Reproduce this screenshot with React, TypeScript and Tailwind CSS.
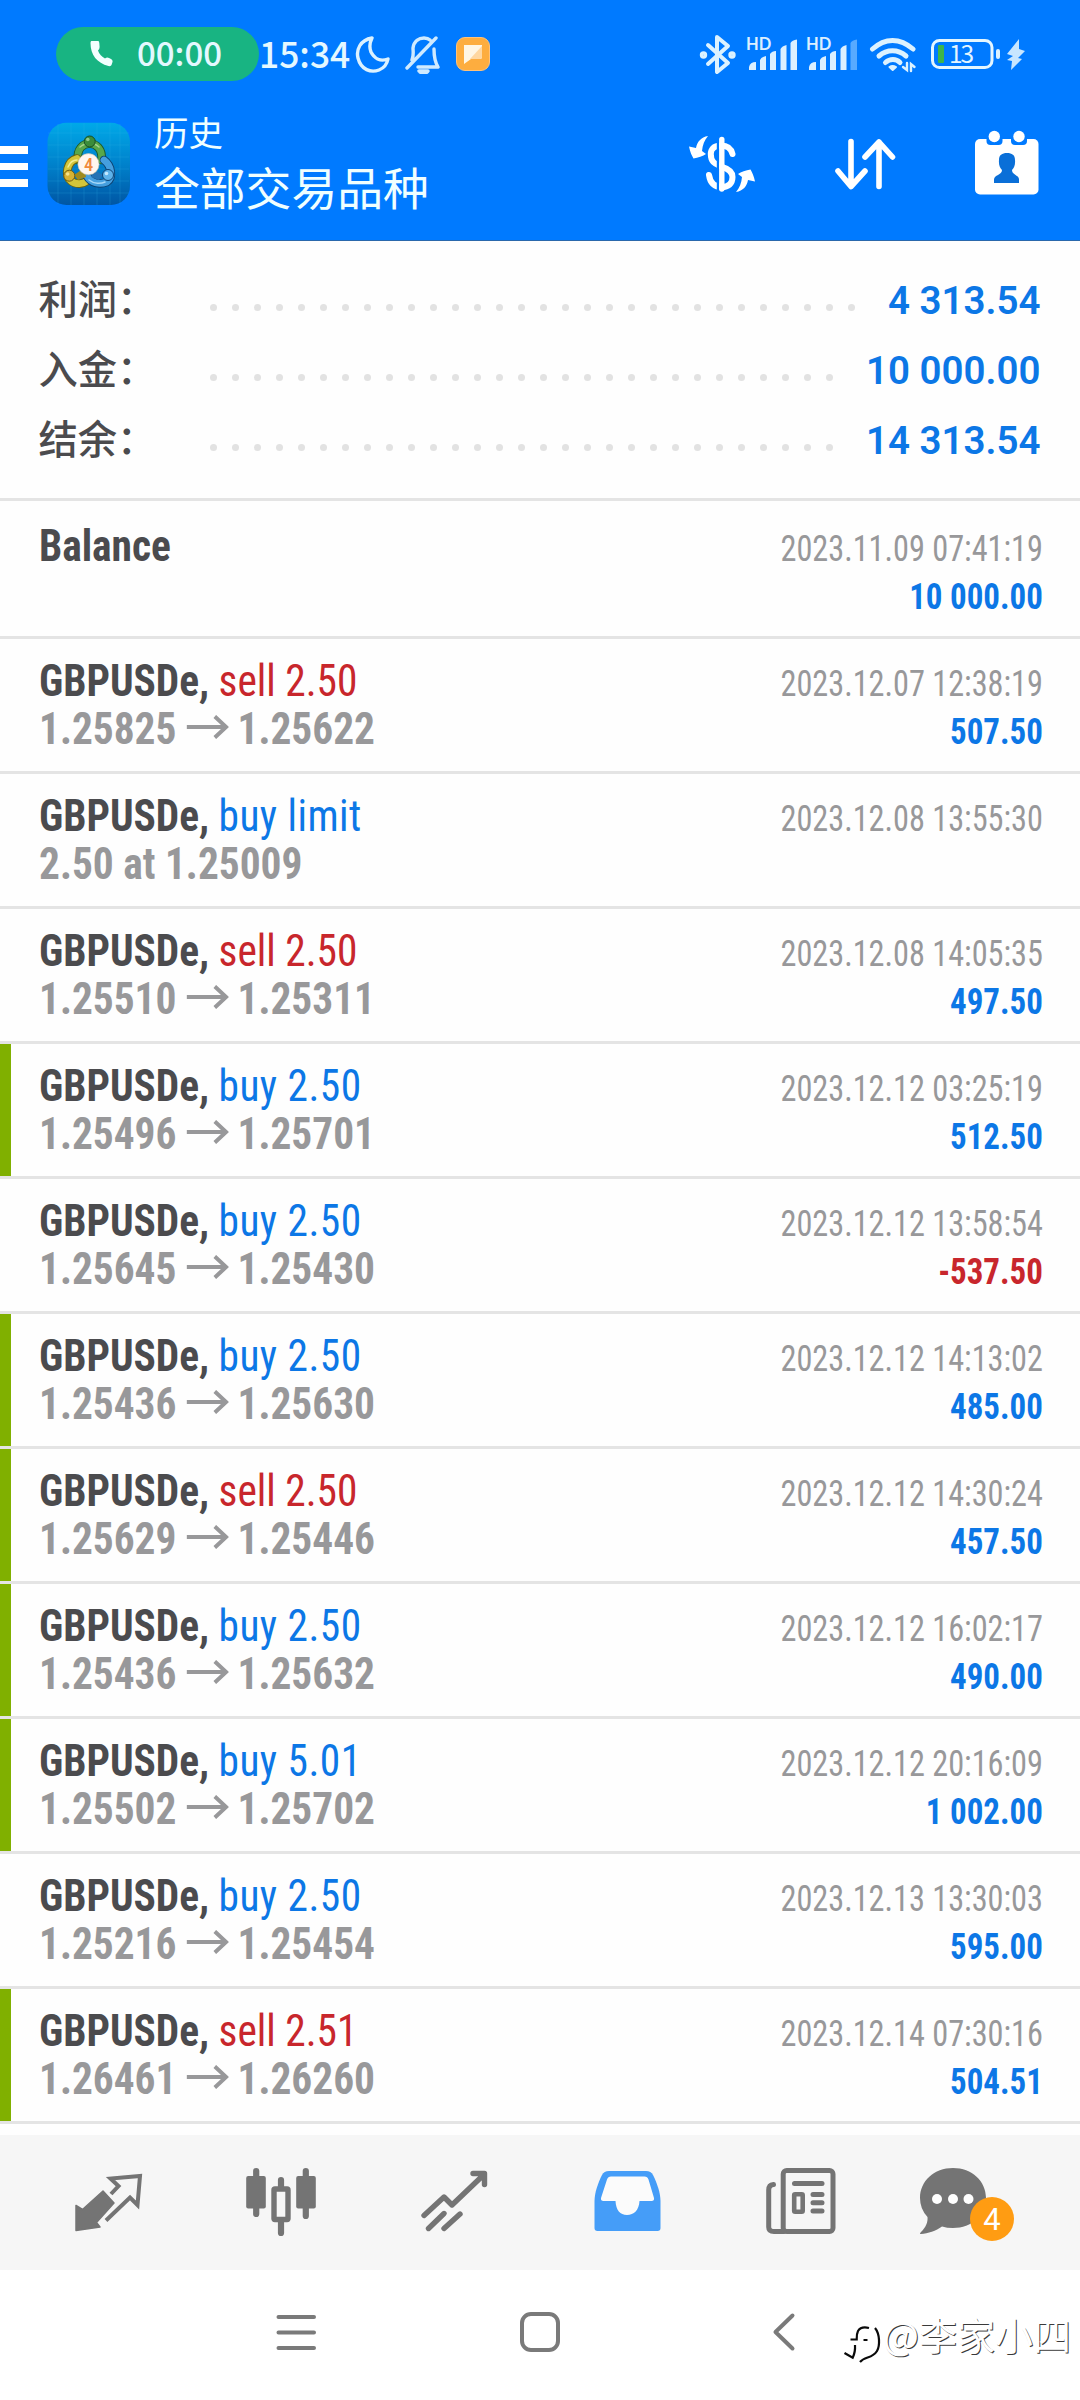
import React from "react";

type Row = {
  symbol: string;
  side?: "buy" | "sell";
  text?: string;
  from?: string;
  to?: string;
  note?: string;
  date: string;
  value?: string;
  marked?: boolean;
};

const rows: Row[] = [
  { symbol: "Balance", date: "2023.11.09 07:41:19", value: "10 000.00" },
  { symbol: "GBPUSDe,", side: "sell", text: "sell 2.50", from: "1.25825", to: "1.25622", date: "2023.12.07 12:38:19", value: "507.50" },
  { symbol: "GBPUSDe,", side: "buy", text: "buy limit", note: "2.50 at 1.25009", date: "2023.12.08 13:55:30" },
  { symbol: "GBPUSDe,", side: "sell", text: "sell 2.50", from: "1.25510", to: "1.25311", date: "2023.12.08 14:05:35", value: "497.50" },
  { symbol: "GBPUSDe,", side: "buy", text: "buy 2.50", from: "1.25496", to: "1.25701", date: "2023.12.12 03:25:19", value: "512.50", marked: true },
  { symbol: "GBPUSDe,", side: "buy", text: "buy 2.50", from: "1.25645", to: "1.25430", date: "2023.12.12 13:58:54", value: "-537.50" },
  { symbol: "GBPUSDe,", side: "buy", text: "buy 2.50", from: "1.25436", to: "1.25630", date: "2023.12.12 14:13:02", value: "485.00", marked: true },
  { symbol: "GBPUSDe,", side: "sell", text: "sell 2.50", from: "1.25629", to: "1.25446", date: "2023.12.12 14:30:24", value: "457.50", marked: true },
  { symbol: "GBPUSDe,", side: "buy", text: "buy 2.50", from: "1.25436", to: "1.25632", date: "2023.12.12 16:02:17", value: "490.00", marked: true },
  { symbol: "GBPUSDe,", side: "buy", text: "buy 5.01", from: "1.25502", to: "1.25702", date: "2023.12.12 20:16:09", value: "1 002.00", marked: true },
  { symbol: "GBPUSDe,", side: "buy", text: "buy 2.50", from: "1.25216", to: "1.25454", date: "2023.12.13 13:30:03", value: "595.00" },
  { symbol: "GBPUSDe,", side: "sell", text: "sell 2.51", from: "1.26461", to: "1.26260", date: "2023.12.14 07:30:16", value: "504.51", marked: true },
];

const summary = [
  { label: "利润：", value: "4 313.54", dots: 30 },
  { label: "入金：", value: "10 000.00", dots: 29 },
  { label: "结余：", value: "14 313.54", dots: 29 },
];

function Signal({ weak }: { weak?: boolean }) {
  return (
    <div className="relative h-[40px] w-[52px]">
      <svg viewBox="746 34 52 40" className="h-[40px] w-[52px]" fill="#dcf0ff">
        <path d="M749 70V67Q750 62 756 62V70Z" />
        <path d="M760 70V60Q761 57 766 56V70Z" />
        <path d="M770 70V54Q772 51 776 51V70Z" />
        <path d="M780.500 70V49Q782 46 786.500 45V70Z" />
        <path d="M790.500 70V43Q792 40 797 39.500V70Z" fill={weak ? "#58aaff" : "#dcf0ff"} />
      </svg>
      <span className="absolute top-0 left-0 font-['Lato',sans-serif] text-[16.500px] leading-[20px] font-bold text-[#dcf0ff]">HD</span>
    </div>
  );
}

function StatusBar() {
  return (
    <div className="flex h-[108px] items-center font-['Noto_Sans_CJK_SC',sans-serif] font-medium text-[#e4f8ff]">
      <div className="ml-[56px] flex h-[54px] w-[203px] items-center rounded-full bg-[#18b482]">
        <svg viewBox="90 42 23 26" className="ml-[34px] h-[26px] w-[23px]" fill="#f2ffff">
          <path d="M90.500 44Q90.500 41.500 93 41.500H97Q99 41.500 99.300 44L99.600 48Q99.600 50 98 51.500C99 55 102 58 105 59.500Q107 58 109 59L111 60Q113 61 112.500 63L111.500 66Q111 67.500 108.500 67C97 64 90.500 56 90.500 44Z" />
        </svg>
        <span className="ml-[24px] w-[86px] text-[33px] leading-[51px] -mt-[3px] whitespace-nowrap">00:00</span>
      </div>
      <span className="-mt-[2px] w-[94px] origin-left scale-x-[0.97] text-[36.500px] leading-[54px] whitespace-nowrap">15:34</span>
      <svg viewBox="355 35 37 39" className="ml-[2px] h-[39px] w-[37px]" fill="none" stroke="#dcf2ff" strokeWidth="3.4" strokeLinejoin="round">
        <path d="M372 38C360 40 356 50 358 58C361 70 371 73 379 70C384 68 387 64 388 59C380 62 374 58 371 52C369 47 370 42 372 38Z" />
      </svg>
      <svg viewBox="405 35 38 39" className="ml-[13px] h-[39px] w-[38px]" fill="none" stroke="#cfeaff" strokeWidth="3.4" strokeLinecap="round" strokeLinejoin="round">
        <path d="M407 68L436 38M412 60C414 55 413 51 413 48C414 41 419 38 424 38Q428 38 430 40M434 49C434 58 435 62 438 67H418" />
        <path d="M419 71H428Q427 73 424 73Q420 73 419 71" />
      </svg>
      <div className="ml-[13px] flex h-[34px] w-[34px] items-center justify-center rounded-[9px] border border-[#ffc27a] bg-[#fdad3f]">
        <svg viewBox="0 0 20 20" className="h-[20px] w-[20px]">
          <path d="M1 1H19V13Q19 15 17 15H8L1 20Z" fill="#fff6e4" />
          <path d="M19 2V13Q19 15 17 15H7Z" fill="#ffd7a0" />
        </svg>
      </div>
      <div className="ml-[209px] flex items-center">
        <svg viewBox="699 33 38 41" className="h-[41px] w-[38px]" fill="none" stroke="#dcf2ff" strokeWidth="4" strokeLinecap="round" strokeLinejoin="round">
          <path d="M708 44L728 62L717 71V36L728 45L708 63" />
          <circle cx="703.500" cy="54" r="1.700" />
          <circle cx="732" cy="54" r="1.700" />
        </svg>
        <div className="ml-[9px]"><Signal /></div>
        <div className="ml-[8px]"><Signal weak /></div>
        <svg viewBox="869 35 49 38" className="ml-[11px] h-[38px] w-[49px]" fill="none" stroke="#dcf2ff" strokeWidth="5" strokeLinecap="round">
          <path d="M872.500 49C885 37.500 900 37.500 913 49" />
          <path d="M879 56C887 49 898 49 906 56" />
          <path d="M885.500 62.500C890 58.500 896 58.500 900 62.500" />
          <path d="M889.500 67Q892.500 65 896 67L892.700 70Z" strokeWidth="2" fill="#dcf2ff" strokeLinejoin="round" />
          <path d="M907 63V70L903 67M911 71V64L914.500 67" strokeWidth="2.400" />
        </svg>
        <svg viewBox="930 38 72 32" className="ml-[12px] h-[32px] w-[72px]" fill="none">
          <rect x="932.500" y="40.500" width="59.500" height="27" rx="7" stroke="#e4f6ff" strokeWidth="3" />
          <rect x="938" y="45" width="6" height="18" rx="1" fill="#3db54a" />
          <rect x="996" y="49" width="4" height="10" rx="2" fill="#dcf2ff" />
          <text x="949" y="63" fontSize="24.500" fontWeight="400" fill="#e4f6ff" textLength="25">13</text>
        </svg>
        <svg viewBox="1006 38 20 33" className="ml-[4px] h-[33px] w-[20px]" fill="#c8e6ff">
          <path d="M1019 39L1007 54L1013 56L1007 60L1012 61L1011 70L1022 59L1018 58L1025 51L1019 49Z" />
        </svg>
      </div>
    </div>
  );
}

function AppLogo() {
  return (
    <svg viewBox="46 122 84 84" className="ml-[19px] h-[84px] w-[84px]">
      <defs>
        <linearGradient id="tile" x1="0" y1="0" x2="0" y2="1">
          <stop offset="0" stopColor="#00a9e8" />
          <stop offset="0.500" stopColor="#0082cc" />
          <stop offset="1" stopColor="#0056a4" />
        </linearGradient>
      </defs>
      <rect x="46.500" y="122.700" width="82.500" height="82.300" rx="19" fill="url(#tile)" />
      <path d="M57 124V204M70 123V205M83 123V205M96 123V205M109 123V205M119 124V204M47 133H128M47 145H128M47 157H128M47 169H128M47 181H128M47 193H128" stroke="#35b6ec" strokeOpacity="0.250" strokeWidth="0.800" fill="none" />
      <g fill="none" strokeLinecap="round">
        <path d="M77 160C74 138 103 138 100.500 160" stroke="#1b5a2a" strokeWidth="8.600" />
        <path d="M77 160C74 138 103 138 100.500 160" stroke="#58a84b" strokeWidth="6.800" />
        <path d="M79 147C85 142 93 142 98 147" stroke="#a6d58c" strokeWidth="1.500" />
        <path d="M76 158.500C66 161 63 176 70 181C75 185 82 184 86 181" stroke="#6b6410" strokeWidth="8.600" />
        <path d="M76 158.500C66 161 63 176 70 181C75 185 82 184 86 181" stroke="#d3c53a" strokeWidth="6.800" />
        <path d="M67 167C69 162 73 160 76 160" stroke="#f4ec90" strokeWidth="1.500" />
        <path d="M103 160C111 166 112 178 106 182C98 185 90 183 86 176" stroke="#0d4272" strokeWidth="8.600" />
        <path d="M103 160C111 166 112 178 106 182C98 185 90 183 86 176" stroke="#459fdf" strokeWidth="6.800" />
        <path d="M88 180C93 184 100 184 104 182" stroke="#a7d8f8" strokeWidth="1.500" />
      </g>
      <path d="M73 175L83 168L85 177L77 180Z" fill="#a08a1c" />
      <path d="M102 175L93 170L90 177L98 180Z" fill="#2472b4" />
      <circle cx="88.700" cy="141.500" r="5.500" fill="#3b8c3b" stroke="#174d24" />
      <circle cx="86.800" cy="139.500" r="1.800" fill="#8fc98a" />
      <circle cx="68.300" cy="175.700" r="5.500" fill="#d6b233" stroke="#6f5a10" />
      <circle cx="66.700" cy="174" r="1.800" fill="#f5e28a" />
      <circle cx="107" cy="175" r="5.500" fill="#5db2ea" stroke="#0d4272" />
      <circle cx="105.500" cy="173.500" r="1.800" fill="#c4e8ff" />
      <circle cx="87.500" cy="164.200" r="10.600" fill="#fff6ee" stroke="#c9c1a8" strokeWidth="0.600" />
      <text x="87.500" y="171" textAnchor="middle" fontSize="18.500" fontWeight="500" fill="#f08a3c" className="font-['Roboto',sans-serif]">4</text>
    </svg>
  );
}

function Toolbar() {
  return (
    <div className="flex h-[132px] items-start">
      <div className="mt-[38px] flex w-[28px] flex-col gap-[9px]">
        <div className="h-[7.500px] bg-white" />
        <div className="h-[7.500px] bg-white" />
        <div className="h-[7.500px] bg-white" />
      </div>
      <div className="mt-[14px]"><AppLogo /></div>
      <div className="ml-[23px] w-[301px] font-['Noto_Sans_CJK_SC',sans-serif] font-normal text-[#f0ffff]">
        <div className="-mt-px text-[34.500px] leading-[48px]">历史</div>
        <div className="mt-px text-[45.800px] leading-[60px]">全部交易品种</div>
      </div>
      <svg viewBox="688 135 68 58" className="mt-[27px] ml-[233px] h-[58px] w-[68px]" fill="#fff">
        <path d="M732.500 154C731 148 727 145.500 721 145.500C713 145.500 710.800 150 710.800 154C710.800 163 716 164 722 167C729 169 732.500 172 732.500 177C732.500 184 728 187 722 187C714 187 710 182 709 175" fill="none" stroke="#fff" strokeWidth="6" strokeLinecap="round" />
        <path d="M718 138V191" stroke="#007aff" strokeWidth="2.400" />
        <path d="M721.800 139.500V189" stroke="#fff" strokeWidth="5.400" strokeLinecap="round" />
        <path id="swap" d="M708 136C701 137 697 142 696 148L689 146.500C690 152 692 156 693.500 158.500C698 158 703 156 706 154L702 151C702.500 145 704.500 140 708 136Z" />
        <use href="#swap" transform="rotate(180 722 164)" />
      </svg>
      <svg viewBox="834 137 62 54" className="mt-[29px] ml-[78px] h-[54px] w-[62px]" fill="none" stroke="#fff" strokeWidth="5.600" strokeLinecap="round" strokeLinejoin="round">
        <path d="M851 141.500V186M838 171L851 186.500L865 171" />
        <path d="M879 186.500V142M865 157L879 142L892.500 157" />
      </svg>
      <svg viewBox="974 130 66 66" className="mt-[22px] ml-[78px] h-[66px] w-[66px]" fill="#fff">
        <rect x="975" y="139" width="63.500" height="55.500" rx="5" />
        <rect x="986.500" y="130" width="16" height="15" rx="4" fill="#007aff" />
        <rect x="1011" y="130" width="16" height="15" rx="4" fill="#007aff" />
        <circle cx="994.300" cy="136.500" r="5.700" />
        <circle cx="1019" cy="136.500" r="5.700" />
        <path d="M1007 153C1012 153 1015 155 1015 160C1015.500 165 1014 168 1012 170C1012 175 1019 175 1019 179.500V183H994V179.500C994 175 1002 175 1002 170C1000 168 998.500 165 999 160C999 155 1002 153 1007 153Z" fill="#0a6fd8" />
      </svg>
    </div>
  );
}

function Summary() {
  return (
    <div className="h-[260px] border-b-[3px] border-[#e4e4e4] pt-[24px]">
      {summary.map((s) => (
        <div key={s.label} className="flex h-[70px] items-start pr-[39.500px] pl-[38.500px]">
          <span className="w-[171.500px] font-['Noto_Sans_CJK_SC',sans-serif] text-[39.300px] leading-[64px] font-medium text-[#4b4b4e]">{s.label}</span>
          <span className="mt-[39px] flex gap-[15px]">
            {Array.from({ length: s.dots }, (_, i) => (
              <i key={i} className="h-[7px] w-[7px] shrink-0 rounded-full bg-[#e2e2e2]" />
            ))}
          </span>
          <span className="ml-auto font-['Roboto',sans-serif] text-[38.500px] leading-[71px] font-semibold whitespace-nowrap text-[#0c77e6] [font-stretch:100%]">{s.value}</span>
        </div>
      ))}
    </div>
  );
}

function HistoryRow({ row, first }: { row: Row; first: boolean }) {
  const tone = row.side === "sell" ? "text-[#c8262c]" : "tracking-[0.5px] text-[#0c77e6]";
  const money = row.value?.startsWith("-") ? "text-[#c8262c]" : "text-[#0c77e6]";
  return (
    <div className={`flex border-b-[3px] border-[#e4e4e4] ${first ? "h-[138px] pt-[3px]" : "h-[135px]"}`}>
      <div className={`w-[11px] ${row.marked ? "bg-[#80b000]" : ""}`} />
      <div className="ml-[28px] origin-left scale-x-[0.94] pt-[18px] text-[44px] leading-[48px] whitespace-pre">
        <div className="flex">
          <span className="font-bold text-[#4b4b4e]">{row.symbol}</span>
          {row.text && <span className={`ml-[10px] ${tone}`}>{row.text}</span>}
        </div>
        <div className="flex font-bold text-[#98989a]">
          {row.note ?? row.from}
          {row.to && (
            <>
              <svg viewBox="0 0 45 24" className="mr-[9px] ml-[11px] mt-[10px] h-[24px] w-[45px]" fill="none" stroke="#98989a" strokeWidth="4.200">
                <path d="M0 12H42M30 1.500L42 12L30 22.500" />
              </svg>
              <span>{row.to}</span>
            </>
          )}
        </div>
      </div>
      <div className="mr-[37px] ml-auto pt-[21px] text-right text-[36px] leading-[48px] whitespace-pre">
        <div className="origin-right scale-x-[0.896] text-[#98989a]">{row.date}</div>
        <div className={`origin-right scale-x-[0.915] font-bold ${money}`}>{row.value}</div>
      </div>
    </div>
  );
}

function Tab({ children }: { children: React.ReactNode }) {
  return <div className="relative flex h-[135px] w-[173px] items-center justify-center">{children}</div>;
}

function TabBar() {
  const size = "h-[81px] w-[96px]";
  return (
    <div className="mt-[11px] flex h-[135px] bg-[#f6f6f6] pl-[21.500px]">
      <Tab>
        <svg viewBox="60 2162 96 81" className={size} fill="#747474">
          <path d="M76 2205.500V2230.500L100 2227L96.500 2222.500L114 2203L103 2191L82.500 2209.500Z" stroke="#747474" strokeWidth="1.500" strokeLinejoin="round" />
          <path d="M111 2194L118.500 2186L110.500 2178.500L140 2176L137.500 2205L130 2197.500L106 2220.500" fill="none" stroke="#747474" strokeWidth="4" />
        </svg>
      </Tab>
      <Tab>
        <svg viewBox="233 2162 96 81" className={size} fill="#747474">
          <path d="M256.200 2171V2214M305.800 2171V2216M281 2180V2188M281 2221V2233" stroke="#747474" strokeWidth="6.200" strokeLinecap="round" />
          <rect x="246.200" y="2176" width="19.600" height="32.500" rx="2" />
          <rect x="296.200" y="2176" width="19.600" height="32.500" rx="2" />
          <rect x="274" y="2189" width="14" height="30.500" rx="1" fill="#f6f6f6" stroke="#747474" strokeWidth="5.400" />
        </svg>
      </Tab>
      <Tab>
        <svg viewBox="406 2162 96 81" className={size} fill="none" stroke="#747474" strokeWidth="5.400" strokeLinecap="round" strokeLinejoin="round">
          <path d="M424 2215.500L444 2197L452 2205L484 2174.500M473 2173.500H484.500V2184.500" />
          <path d="M428.500 2228.500L444 2213.500M444 2228.500L460 2214" />
        </svg>
      </Tab>
      <Tab>
        <svg viewBox="579 2162 96 81" className={size}>
          <path d="M609 2171H646Q651 2171 653 2175C657 2183 660.500 2193 660.500 2201V2228Q660.500 2231 657.500 2231H597.500Q594.500 2231 594.500 2228V2201C594.500 2193 598 2183 602 2175Q604 2171 609 2171Z" fill="#459df8" />
          <path d="M611 2176.500H644.500Q647.500 2176.500 648.500 2179.500L654 2198Q654.500 2201 651.500 2201H639.500C639 2210 634 2215 627 2215C620 2215 616 2210 615.500 2201H603.500Q600.500 2201 601 2198L607 2179.500Q608 2176.500 611 2176.500Z" fill="#fbfbfb" />
        </svg>
      </Tab>
      <Tab>
        <svg viewBox="752 2162 96 81" className={size} fill="none" stroke="#747474" strokeWidth="5" strokeLinecap="round">
          <rect x="783.200" y="2170.500" width="49.800" height="61" rx="3.500" />
          <path d="M773.500 2184.500Q768.700 2185 768.700 2190V2227Q768.700 2231.500 774 2231.500H784" />
          <path d="M794.500 2183.500H822" />
          <path d="M813 2194.500H822M813 2202.700H822M813 2211H822" />
          <rect x="794.200" y="2194.200" width="8.500" height="17.600" rx="1" strokeWidth="4.600" />
        </svg>
      </Tab>
      <Tab>
        <svg viewBox="925 2162 96 81" className={`${size} overflow-visible`} fill="#747474">
          <path d="M953 2168C972 2168 986 2181 986 2198C986 2215 972 2228 953 2228Q947 2228 942 2226.500C936 2231 928 2233.500 921 2234Q919 2234 921 2232C926 2227 928 2222 927.500 2217Q920 2209 920 2198C920 2181 934 2168 953 2168Z" />
          <g fill="#fff">
            <circle cx="937" cy="2199" r="5" />
            <circle cx="953" cy="2199" r="5" />
            <circle cx="968.500" cy="2199" r="5" />
          </g>
        </svg>
        <span className="absolute top-[62px] left-[83.500px] h-[44px] w-[44px] rounded-full bg-[#ff9c12] text-center font-['Roboto',sans-serif] text-[31px] leading-[46px] text-white [font-stretch:100%]">4</span>
      </Tab>
    </div>
  );
}

function SystemNav() {
  return (
    <div className="flex h-[130px] items-start bg-white">
      <svg viewBox="274 2310 44 44" className="mt-[40px] ml-[274px] h-[44px] w-[44px]" fill="none" stroke="#7a7a7a" strokeWidth="4" strokeLinecap="round">
        <path d="M278.500 2317H314M278.500 2332.500H314M278.500 2348H314" />
      </svg>
      <svg viewBox="518 2310 44 44" className="mt-[40px] ml-[200px] h-[44px] w-[44px]" fill="none" stroke="#7a7a7a" strokeWidth="4">
        <rect x="522" y="2314" width="36" height="36" rx="9" />
      </svg>
      <svg viewBox="770 2310 28 44" className="mt-[40px] ml-[208px] h-[44px] w-[28px]" fill="none" stroke="#7a7a7a" strokeWidth="4" strokeLinecap="round" strokeLinejoin="round">
        <path d="M792.500 2315.500L775.500 2332L792.500 2348.500" />
      </svg>
      <svg viewBox="843 2322 38 44" className="mt-[52px] ml-[45px] h-[44px] w-[38px]" fill="none" stroke="#0a0a0a" strokeWidth="2.200">
        <path d="M869 2328Q861 2326 858 2331Q856.500 2334 856.700 2339.500H850.500M863.500 2340H867.500M855 2345Q855.500 2352 852.700 2357.700L844.500 2353" />
        <path d="M875 2328C880 2334 880 2346 877 2351C872 2359 865 2356 860 2362" />
      </svg>
      <span className="mt-[36px] ml-[2px] font-['Noto_Sans_CJK_SC',sans-serif] text-[38px] leading-[56px] whitespace-nowrap text-white [text-shadow:1px_1px_0_#3a3a3a]">@李家小四</span>
    </div>
  );
}

export default function App() {
  return (
    <div className="h-[2400px] w-[1080px] overflow-hidden bg-[#fefefe] font-['Roboto',sans-serif] [font-stretch:75%]">
      <header className="h-[241px] border-b border-[#2a68ac] bg-[#007aff]">
        <StatusBar />
        <Toolbar />
      </header>
      <Summary />
      {rows.map((row, i) => (
        <HistoryRow key={row.date} row={row} first={i === 0} />
      ))}
      <TabBar />
      <SystemNav />
    </div>
  );
}
